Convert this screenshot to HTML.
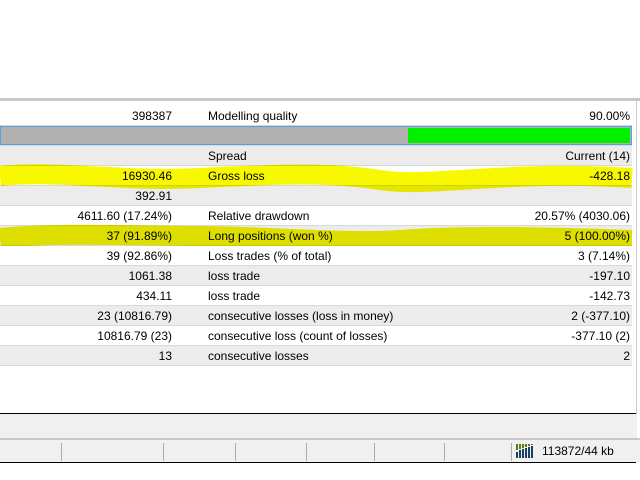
<!DOCTYPE html><html><head><style>
body{margin:0;width:640px;height:480px;background:#fff;position:relative;overflow:hidden;font-family:"Liberation Sans",sans-serif;font-size:12px;color:#000}
.r{position:absolute;left:0;width:632px;height:20px;border-bottom:1px solid #d8d8d8;box-sizing:border-box}
.g{background:#ececec}.w{background:#fff}
.a{position:absolute;right:460px;top:3px}
.b{position:absolute;left:208px;top:3px}
.c{position:absolute;right:2px;top:3px}
.s{position:absolute;top:443px;width:1px;height:18px;background:#aaa}
</style></head><body>
<div style="position:absolute;left:0;top:98px;width:640px;height:3px;background:#c8c8c8"></div>
<div style="position:absolute;left:636px;top:101px;width:1px;height:337px;background:#ccc"></div>
<div class="r w" style="top:106px"><span class="a">398387</span><span class="b">Modelling quality</span><span class="c">90.00%</span></div>
<div class="r w" style="top:126px"><div style="position:absolute;left:0;top:0;width:632px;height:19px;border:1px solid #5a9fd8;box-sizing:border-box;background:#b0b0b0"><div style="position:absolute;left:407px;top:1px;right:1px;bottom:1px;background:#00f000"></div></div></div>
<div class="r g" style="top:146px"><span class="b">Spread</span><span class="c">Current (14)</span></div>
<div class="r" style="top:166px"><span class="a">16930.46</span><span class="b">Gross loss</span><span class="c">-428.18</span></div>
<div class="r g" style="top:186px"><span class="a">392.91</span></div>
<div class="r w" style="top:206px"><span class="a">4611.60 (17.24%)</span><span class="b">Relative drawdown</span><span class="c">20.57% (4030.06)</span></div>
<div class="r g" style="top:226px"><span class="a">37 (91.89%)</span><span class="b">Long positions (won %)</span><span class="c">5 (100.00%)</span></div>
<svg style="position:absolute;left:0;top:0;mix-blend-mode:multiply" width="640" height="480"><path d="M0 176 C60 170 120 182 200 178 S330 172 380 180 S500 170 632 178" stroke="#f8f800" stroke-width="20" fill="none"/><path d="M0 238 C60 232 140 236 200 236 S350 244 400 240 S520 236 632 240" stroke="#f0f000" stroke-width="20" fill="none"/></svg>
<div class="r w" style="top:246px"><span class="a">39 (92.86%)</span><span class="b">Loss trades (% of total)</span><span class="c">3 (7.14%)</span></div>
<div class="r g" style="top:266px"><span class="a">1061.38</span><span class="b">loss trade</span><span class="c">-197.10</span></div>
<div class="r w" style="top:286px"><span class="a">434.11</span><span class="b">loss trade</span><span class="c">-142.73</span></div>
<div class="r g" style="top:306px"><span class="a">23 (10816.79)</span><span class="b">consecutive losses (loss in money)</span><span class="c">2 (-377.10)</span></div>
<div class="r w" style="top:326px"><span class="a">10816.79 (23)</span><span class="b">consecutive loss (count of losses)</span><span class="c">-377.10 (2)</span></div>
<div class="r g" style="top:346px"><span class="a">13</span><span class="b">consecutive losses</span><span class="c">2</span></div>
<div style="position:absolute;left:0;top:413px;width:636px;height:1px;background:#000"></div>
<div style="position:absolute;left:0;top:414px;width:637px;height:24px;background:#f0f0f0"></div>
<div style="position:absolute;left:0;top:438px;width:640px;height:2px;background:#c8c8c8"></div>
<div style="position:absolute;left:0;top:440px;width:640px;height:22px;background:#f0f0f0"></div>
<div class="s" style="left:61px"></div><div class="s" style="left:163px"></div><div class="s" style="left:235px"></div><div class="s" style="left:306px"></div><div class="s" style="left:374px"></div><div class="s" style="left:444px"></div><div class="s" style="left:511px"></div>
<svg style="position:absolute;left:516px;top:444px" width="22" height="14"><g fill="#5a7a10"><rect x="0" y="0" width="2" height="6"/><rect x="3" y="0" width="2" height="5"/><rect x="6" y="0" width="2" height="4"/><rect x="9" y="0" width="2" height="3"/><rect x="12" y="0" width="2" height="2"/><rect x="15" y="0" width="2" height="1"/></g><g fill="#1a4060"><rect x="0" y="8" width="2" height="6"/><rect x="3" y="6" width="2" height="8"/><rect x="6" y="5" width="2" height="9"/><rect x="9" y="4" width="2" height="10"/><rect x="12" y="3" width="2" height="11"/><rect x="15" y="2" width="2" height="12"/></g></svg>
<span style="position:absolute;left:542px;top:444px">113872/44 kb</span>
<div style="position:absolute;left:0;top:462px;width:636px;height:1px;background:#000"></div>
</body></html>
